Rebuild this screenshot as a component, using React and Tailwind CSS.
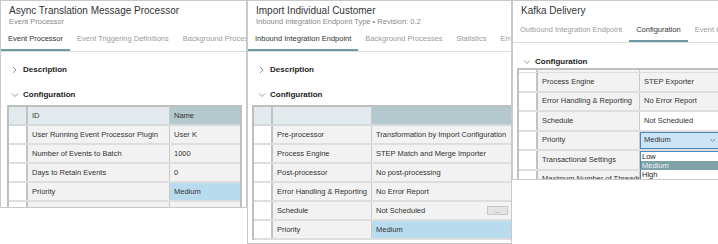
import React from 'react';

function Chevron({ open }) {
  return (
    <svg width="8" height="8" viewBox="0 0 8 8" className="shrink-0">
      <polyline points={open ? '1,2.5 4,5.5 7,2.5' : '2,1 5,4 2,7'} fill="none" stroke="#8c8c8c" strokeWidth="0.9" />
    </svg>
  );
}

function Section({ open, label, className = '' }) {
  return (
    <div className={`flex items-center gap-[4px] pl-[10px] ${className}`}>
      <Chevron open={open} />
      <span className="text-[8px] leading-[12px] font-bold text-[#222]">{label}</span>
    </div>
  );
}

function Row({ cols, label, value, kind, header, tall }) {
  let valueBg = 'bg-[#f2f2f2]';
  if (header) valueBg = 'bg-[#b4c9ce]';
  if (kind === 'blue') valueBg = 'bg-[#b8dcee]';
  if (kind === 'white') valueBg = 'bg-white';
  return (
    <div className={`grid ${cols} ${tall ? 'h-[19.5px]' : 'h-[19px]'} border-b-2 ${header ? 'border-[#d3dadd]' : 'border-[#dedede]'}`}>
      <div className={`border-r-2 border-[#c2c2c2] ${header ? 'bg-[#e3eaed]' : 'bg-white'}`} />
      <div className={`flex items-center px-[4px] border-r border-[#c9c9c9] whitespace-nowrap overflow-hidden ${header ? 'bg-[#e3eaed]' : 'bg-[#f2f2f2]'}`}>
        {label}
      </div>
      <div className={`relative flex items-center px-[4px] whitespace-nowrap ${valueBg}`}>
        {value}
        {kind === 'button' && (
          <span className="ml-auto flex items-center justify-center w-[21px] h-[9px] bg-[#e4e4e4] border border-[#c8c8c8] text-[6px] leading-[6px] text-[#555]">...</span>
        )}
      </div>
    </div>
  );
}

function Select() {
  return (
    <div className="relative flex items-center w-full h-full -mx-[4px] px-[3px] bg-[#cce4f7] border border-[#4a87bd]">
      <span>Medium</span>
      <svg width="7" height="5" viewBox="0 0 7 5" className="ml-auto mr-[2px]">
        <polyline points="1,1 3.5,3.5 6,1" fill="none" stroke="#777" strokeWidth="0.8" />
      </svg>
      <div className="absolute left-[-1px] top-[18px] w-[calc(100%+2px)] bg-white border border-[#4a87bd] text-[7.5px] leading-[9px] text-[#222] z-10">
        <div className="px-[1px]">Low</div>
        <div className="px-[1px] bg-[#7fa2a8] text-[#e8f0f1]">Medium</div>
        <div className="px-[1px]">High</div>
      </div>
    </div>
  );
}

function Panel({ title, subtitle, tabs, active, className, tabGap, children }) {
  return (
    <div className={`shrink-0 overflow-hidden bg-white border border-[#c9c9c9] ${className}`}>
      <div className="pl-[8px] pt-[4px]">
        <div className="text-[10px] leading-[12px] text-[#333] whitespace-nowrap">{title}</div>
        {subtitle && <div className="text-[7.5px] leading-[10px] text-[#8a8a8a] whitespace-nowrap">{subtitle}</div>}
      </div>
      <div className={`flex border-b border-[#d5dde0] whitespace-nowrap ${tabGap}`}>
        {tabs.map((t, i) => (
          <div
            key={t}
            className={`shrink-0 px-[7px] pb-[5px] text-[7.5px] leading-[10px] border-b-2 ${
              i === active ? 'border-[#6f9ba2] text-[#333]' : 'border-transparent text-[#9b9b9b]'
            }`}
          >
            {t}
          </div>
        ))}
      </div>
      {children}
    </div>
  );
}

export default function App() {
  const c1 = 'grid-cols-[19px_142px_70px]';
  const c2 = 'grid-cols-[19px_99px_140px]';
  const c3 = 'grid-cols-[19px_102px_90px]';

  return (
    <div className="flex items-start w-[718px] h-[244px] overflow-hidden bg-white font-['Liberation_Sans',Arial,sans-serif]">
      <Panel
        title="Async Translation Message Processor"
        subtitle="Event Processor"
        tabs={['Event Processor', 'Event Triggering Definitions', 'Background Processes']}
        active={0}
        tabGap="mt-[7px]"
        className="w-[247px] h-[208px]"
      >
        <Section label="Description" className="mt-[12px]" />
        <Section open label="Configuration" className="mt-[13px]" />
        <div className="mt-[4px] ml-[6px] w-fit border-2 border-b-0 border-[#bfbfbf] text-[7.5px] leading-[10px] text-[#333]">
          <Row cols={c1} header label="ID" value="Name" />
          <Row cols={c1} label="User Running Event Processor Plugin" value="User K" />
          <Row cols={c1} label="Number of Events to Batch" value="1000" />
          <Row cols={c1} label="Days to Retain Events" value="0" />
          <Row cols={c1} label="Priority" value="Medium" kind="blue" />
          <Row cols={c1} label="" value="" />
        </div>
      </Panel>

      <Panel
        title="Import Individual Customer"
        subtitle="Inbound Integration Endpoint Type • Revision: 0.2"
        tabs={['Inbound Integration Endpoint', 'Background Processes', 'Statistics', 'Error Log']}
        active={0}
        tabGap="mt-[7px]"
        className="w-[265px] h-[244px] border-l"
      >
        <Section label="Description" className="mt-[12px]" />
        <Section open label="Configuration" className="mt-[13px]" />
        <div className="mt-[4px] ml-[4px] w-fit border-2 border-b-0 border-[#bfbfbf] text-[7.5px] leading-[10px] text-[#333]">
          <Row cols={c2} header label="" value="" />
          <Row cols={c2} label="Pre-processor" value="Transformation by Import Configuration" />
          <Row cols={c2} label="Process Engine" value="STEP Match and Merge Importer" />
          <Row cols={c2} label="Post-processor" value="No post-processing" />
          <Row cols={c2} label="Error Handling & Reporting" value="No Error Report" />
          <Row cols={c2} label="Schedule" value="Not Scheduled" kind="button" />
          <Row cols={c2} label="Priority" value="Medium" kind="blue" />
        </div>
      </Panel>

      <Panel
        title="Kafka Delivery"
        tabs={['Outbound Integration Endpoint', 'Configuration', 'Event Queue']}
        active={1}
        tabGap="mt-[8px]"
        className="w-[206px] h-[180px] border-r-0"
      >
        <Section open label="Configuration" className="mt-[13px]" />
        <div className="ml-[4px] w-fit border-2 border-r-0 border-b-0 border-[#bfbfbf] text-[7.5px] leading-[10px] text-[#333]">
          <div className={`grid ${c3} h-[3px] border-b border-[#dedede]`}>
            <div className="border-r-2 border-[#c2c2c2]" />
            <div className="bg-[#f2f2f2] border-r border-[#c9c9c9]" />
            <div className="bg-[#f2f2f2]" />
          </div>
          <Row cols={c3} tall label="Process Engine" value="STEP Exporter" />
          <Row cols={c3} tall label="Error Handling & Reporting" value="No Error Report" />
          <Row cols={c3} tall label="Schedule" value="Not Scheduled" kind="white" />
          <Row cols={c3} tall label="Priority" value={<Select />} kind="white" />
          <Row cols={c3} tall label="Transactional Settings" value="" />
          <Row cols={c3} tall label="Maximum Number of Threads" value="" />
        </div>
      </Panel>
    </div>
  );
}
